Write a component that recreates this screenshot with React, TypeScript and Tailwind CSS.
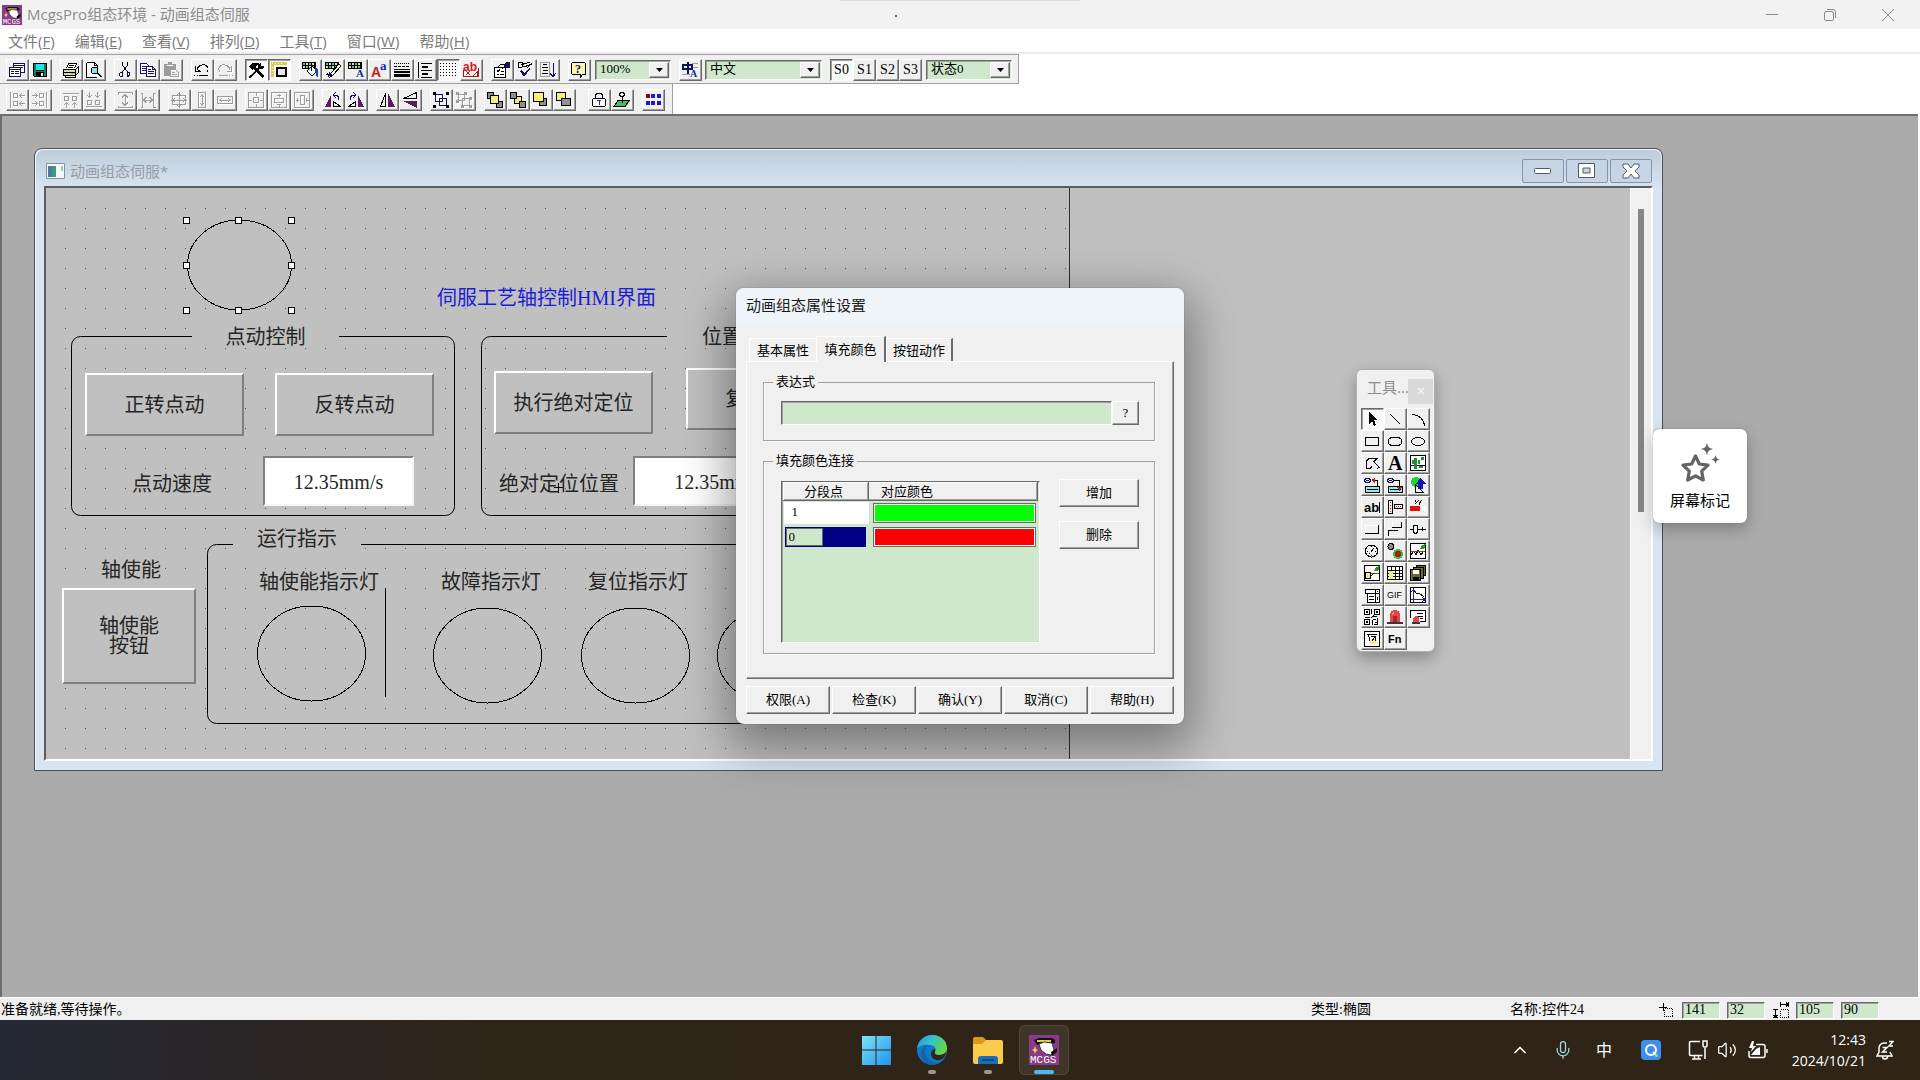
import { ReactNode, useState } from "react";
import { ChevronUp, Mic, Volume2, X } from "lucide-react";

// [color, path, "f" for fill (stroke otherwise)]
type Layer = [string, string, string?];
// [x, y, size, color, text, font]
type Label = [number, number, number, string, string, string];
type Art = { layers: Layer[]; labels?: Label[]; muted?: boolean };

const K = "#000000";
const N = "#10105e";
const G = "#9c9c9c";
const P = "#5b1a63";
const Y = "#f6f07a";
const SANS = "Liberation Sans";
const SERIF = "Liberation Serif";

const PALETTE: Layer[] = [
  [K, "M0 0h14v7h-14z", "f"],
  ["#4fc3b0", "M1 1h2v2h-2zM7 1h2v2h-2zM4 4h2v2h-2zM10 4h2v2h-2z", "f"],
  ["#e9e08a", "M4 1h2v2h-2zM10 1h2v2h-2zM1 4h2v2h-2zM7 4h2v2h-2z", "f"]
];

const ART: Record<string, Art> = {
  窗口列表: {
    layers: [
      ["#fff", "M4 1h11v10h-11z", "f"],
      [N, "M4.5 1.5h11v9h-11zM4 3.5h11M6 5.5h8"],
      ["#fff", "M1 5h10v9h-10z", "f"],
      [N, "M.5 5.5h11v9h-11zM1 7.5h10M2 9.5h3M6 9.5h4M2 11.5h3M6 11.5h4"]
    ]
  },
  存盘: {
    layers: [
      [K, "M1 1h14v14h-13l-1-1z", "f"],
      ["#0f7d6c", "M2 2h2v12h-2zM12 2h2v12h-2z", "f"],
      ["#22e6e6", "M4 2h8v6h-8z", "f"],
      ["#0f7d6c", "M2 9h12v1h-12z", "f"],
      ["#e8e8e8", "M9 11h2v3h-2z", "f"]
    ]
  },
  打印: {
    layers: [
      ["#fff", "M5 1h9l-2 6h-9z", "f"],
      [K, "M5.5 1.5h8l-2 5M5.5 1.5l-2 5M6 3.5h5M5 5.5h5"],
      ["#d9d9c0", "M1 7h13v6h-13z", "f"],
      [K, "M.5 7.5h12v6h-12zM12.5 7.5l3-3v6l-3 3M1 10.5h11M2.5 13.5v2h10v-2"],
      ["#c8b400", "M8 11h3v1h-3z", "f"]
    ]
  },
  打印预览: {
    layers: [
      ["#fff", "M1 0h8l3 3v12h-11z", "f"],
      [K, "M.5 .5h8l3 3v3M.5 .5v15h10M8.5 .5v3h3"],
      ["#8fe3ea", "M6 6h5v5h-5z", "f"],
      [K, "M6.5 5.5h4l1 1v4l-1 1h-4l-1-1v-4zM11 11l4 4M12 11l4 4"]
    ]
  },
  剪切: { layers: [[K, "M5.5 0v3l5 7M10.5 0v3l-5 7"], [N, "M3.5 10.5h2v4h-2l-1-1v-2zM10.5 10.5h2v2l-1 2h-1z"]] },
  复制: {
    layers: [
      ["#fff", "M1 1h6l3 3v8h-9z", "f"],
      [N, "M.5 1.5h6l2 2v8h-8zM2 4.5h4M2 6.5h5M2 8.5h5"],
      ["#fff", "M7 4h6l3 3v8h-9z", "f"],
      [N, "M6.5 4.5h6l3 3v7h-9zM12.5 4.5v3h3M8 7.5h3M8 9.5h6M8 11.5h6"]
    ]
  },
  粘贴: {
    muted: true,
    layers: [[G, "M1 2h4v-2h4v2h4v5h-6v7h-6z", "f"], ["#fff", "M4 3h6v1h-6z", "f"], [G, "M7.5 7.5h5l3 3v4h-8zM9 10.5h3M9 12.5h5"]]
  },
  撤消: { layers: [[K, "M3 8C4 2 12 1 14 6c.5 2 0 3-1 4M1.5 4v5h5M3.5 8.5h2M0 13.5h1M3 13.5h1M5 13.5h9"]] },
  重做: { muted: true, layers: [[G, "M13 8C12 2 4 1 2 6c-.5 2 0 3 1 4M14.5 4v5h-5M2 13.5h9M12 13.5h1M15 13.5h1"]] },
  工具箱: {
    layers: [
      [K, "M1 4l3-3h6l2 2-1 1-2-1-1 2 8 9-2 2-8-9-2 1z", "f"],
      [K, "M12 1h1v3h3v1l-2 2h-3l-8 9h-2v-2l9-8v-3z", "f"],
      ["#c8a060", "M3 13l4-5 0 1-3 4z", "f"]
    ]
  },
  绘图编辑: {
    layers: [
      ["#d6cb55", "M0 0h16v3h-16zM0 3h3v12h-3z", "f"],
      ["#fff", "M1 1h1v1h-1zM4 1h1v1h-1zM7 1h1v1h-1zM10 1h1v1h-1zM1 5h1v1h-1zM1 8h1v1h-1zM1 11h1v1h-1z", "f"],
      ["#e8e8e8", "M6 6h10v9h-10z", "f"],
      [K, "M5 5h11v10h-11zM7 7v6h7v-6z", "f"]
    ]
  },
  填充色: {
    layers: [
      ...PALETTE,
      ["#fff", "M5 9l5-5 5 5-5 5z", "f"],
      [K, "M5 9l5-5 5 5-5 5zM9.5 9v-8"],
      ["#1645b5", "M13 5l3 2v8h-1l-2-6z", "f"]
    ]
  },
  线色: {
    layers: [...PALETTE, ["#fff", "M6 11l8-9 2 2-8 9z", "f"], [K, "M6 11l8-9 2 2-8 9-3 2zM1 13c2-4 2 3 5 0"], [N, "M4 10l4 3-5 2z", "f"]]
  },
  字符色: { layers: PALETTE, labels: [[8, 15, 11, "#10308a", "A", SERIF]] },
  字符字体: { layers: [], labels: [[0, 15, 14, "#c81c1c", "A", SANS], [9, 8, 13, "#1c1cc8", "a", SERIF]] },
  线型: {
    layers: [
      [K, "M0 1.5h1M2 1.5h1M4 1.5h1M6 1.5h1M8 1.5h1M10 1.5h1M12 1.5h1M14 1.5h1M0 4.5h3M4 4.5h3M8 4.5h3M12 4.5h3"],
      [K, "M0 7h16v1h-16zM0 9h16v2h-16zM0 12h16v3h-16z", "f"]
    ]
  },
  对齐: { layers: [[K, "M1.5 0v16M4 1.5h11M5 4.5h6M5 5.5h6M4 8.5h11M5 11.5h6M5 12.5h6M4 15.5h11"]] },
  网格: {
    layers: [[K, "M0 1.5h1M3 1.5h1M6 1.5h1M9 1.5h1M12 1.5h1M15 1.5h1M0 4.5h1M3 4.5h1M6 4.5h1M9 4.5h1M12 4.5h1M15 4.5h1M0 7.5h1M3 7.5h1M6 7.5h1M9 7.5h1M12 7.5h1M15 7.5h1M0 10.5h1M3 10.5h1M6 10.5h1M9 10.5h1M12 10.5h1M15 10.5h1M0 13.5h1M3 13.5h1M6 13.5h1M9 13.5h1M12 13.5h1M15 13.5h1"]]
  },
  文字替换: {
    layers: [["#a01818", "M.5 7.5v7h15v-9M3 9l4 4M7 9l-4 4M10 14l4-4v4z"]],
    labels: [[0, 9, 12, "#d01818", "ab", SANS]]
  },
  属性: {
    layers: [
      ["#fff", "M1 5h11v10h-11z", "f"],
      [K, "M.5 5.5h11v10h-11zM3 8.5l1 1 2-2M7 9.5h3M3 12.5h2M6 12.5h4M4 5l3-3h4l1 2-4 3"],
      [N, "M12 0h4v6h-4l-2-2z", "f"]
    ]
  },
  检查: { layers: [[K, "M1.5 .5h4l1 2-2 3h-3zM4 3l9-3M6 5l9-3M7 4.5h3M10 6l5-5"], [N, "M3 9l2-1 2 3 5-5 1 1-6 8z", "f"]] },
  排序: { layers: [[G, "M.5 .5h9v14h-9z"], [K, "M3 2.5h4M2 5.5h6M3 8.5h5M2 11.5h6"], [N, "M13 1v13M10 11l3 4 3-4"]] },
  帮助: { layers: [["#fbf7b0", "M1 0h13l1 2v10h-4l-2 3v-3h-8z", "f"], [K, "M1.5 .5h12l1 1v11h-3l-2 3v-3h-8l-1-1v-10z"]], labels: [[4, 11, 12, N, "?", SERIF]] },
  语言: { layers: [[G, "M10 1.5h6M10 5.5h6M0 12.5h8"], [N, "M5 0h2v12h-2zM0 2h11v6h-11zM2 4v2h7v-2z", "f"]], labels: [[8, 15, 10, "#10308a", "A", SERIF]] },

  左对齐: { muted: true, layers: [[G, "M1.5 0v16M4.5 1.5h4v4h-4zM4.5 9.5h4v4h-4zM16 3.5h-5M13 1l-2 2.5 2 2.5M16 11.5h-5M13 9l-2 2.5 2 2.5"]] },
  右对齐: { muted: true, layers: [[G, "M14.5 0v16M7.5 1.5h4v4h-4zM7.5 9.5h4v4h-4zM0 3.5h5M3 1l2 2.5-2 2.5M0 11.5h5M3 9l2 2.5-2 2.5"]] },
  上对齐: { muted: true, layers: [[G, "M0 1.5h16M1.5 4.5h4v4h-4zM9.5 4.5h4v4h-4zM3.5 16v-5M1 13l2.5-2 2.5 2M11.5 16v-5M9 13l2.5-2 2.5 2"]] },
  下对齐: { muted: true, layers: [[G, "M0 14.5h16M1.5 8.5h4v4h-4zM9.5 8.5h4v4h-4zM3.5 0v5M1 3l2.5 2 2.5-2M11.5 0v5M9 3l2.5 2 2.5-2"]] },
  纵向等间距: { muted: true, layers: [[G, "M1 .5h14v2M1.5 .5v2M1 15.5h14v-2M1.5 15.5v-2M8 3v10M5 5.5l3-3 3 3M5 10.5l3 3 3-3"]] },
  横向等间距: { muted: true, layers: [[G, "M.5 1h2v14h-2M15.5 1h-2v14h2M4 8h8M6.5 5l-3 3 3 3M9.5 5l3 3-3 3"]] },
  等高宽: { muted: true, layers: [[G, "M1.5 3.5h13v9h-13zM8 0v16M0 8h16M6 3l2-2 2 2M6 13l2 2 2-2M4 6l-2 2 2 2M12 6l2 2-2 2"]] },
  等高: { muted: true, layers: [[G, "M4.5 .5h7v15h-7zM8 2v12M6 5l2-2 2 2M6 11l2 2 2-2"]] },
  等宽: { muted: true, layers: [[G, "M.5 4.5h15v7h-15zM2 8h12M5 6l-2 2 2 2M11 6l2 2-2 2"]] },
  窗口居中: { muted: true, layers: [[G, "M.5 .5h15v15h-15zM5.5 5.5h5v5h-5zM8 1v3M8 12v3M1 8h3M12 8h3"]] },
  纵向居中: { muted: true, layers: [[G, "M.5 .5h15v15h-15zM3.5 6.5h9v4h-9zM8 2v3M8 12v3M6 3.5h4M6 12.5h4"]] },
  横向居中: { muted: true, layers: [[G, "M.5 .5h15v15h-15zM6.5 3.5h4v9h-4zM2 8h3M12 8h3M3.5 6v4M12.5 6v4"]] },
  左旋: { layers: [[P, "M6 3v12h-6z", "f"], [K, "M8.5 14.5l7 0-7-5z"], [N, "M13.5 8v-3l-2-2h-3M11 0l-3 3 3 3"]] },
  右旋: { layers: [[P, "M10 3v12h6z", "f"], [K, "M7.5 14.5l-7 0 7-5z"], [N, "M2.5 8v-3l2-2h3M5 0l3 3-3 3"]] },
  左右镜像: { layers: [[K, "M6.5 1.5v13h-5z"], [P, "M9 1v14h7z", "f"]] },
  上下镜像: { layers: [[K, "M14.5 .5v6h-13z"], [P, "M15 9v7l-14-7z", "f"]] },
  组合: {
    layers: [
      ["#fff", "M3 3h8v8h-8z", "f"],
      [N, "M2.5 2.5h7v7h-7zM6.5 6.5h7v7h-7z"],
      [K, "M0 0h3v3h-3zM13 0h3v3h-3zM0 13h3v3h-3zM13 13h3v3h-3z", "f"]
    ]
  },
  分解: { muted: true, layers: [[G, "M2.5 2.5h6v6h-6zM6.5 6.5h7v7h-7z"], [G, "M0 0h3v3h-3zM8 0h3v3h-3zM0 8h3v3h-3zM13 5h3v3h-3zM5 13h3v3h-3zM13 13h3v3h-3z", "f"]] },
  最前面: { layers: [["#909090", "M1 1h6v6h-6zM9 9h6v6h-6z", "f"], [K, "M.5 .5h6v6h-6zM9.5 9.5h6v6h-6z"], [Y, "M4 4h8v8h-8z", "f"], [K, "M3.5 3.5h8v8h-8z"]] },
  最后面: { layers: [[Y, "M4 4h8v8h-8z", "f"], [K, "M4.5 4.5h7v7h-7z"], ["#909090", "M0 0h7v7h-7zM9 9h7v7h-7z", "f"], [K, "M.5 .5h6v6h-6zM9.5 9.5h6v6h-6z"]] },
  前一层: { layers: [["#909090", "M6 7h8v7h-8z", "f"], [K, "M6.5 6.5h7v7h-7z"], [Y, "M1 1h9v9h-9z", "f"], [K, "M.5 .5h10v9h-10z"]] },
  后一层: { layers: [[Y, "M1 1h9v8h-9z", "f"], [K, "M.5 .5h9v8h-9z"], ["#909090", "M6 7h8v7h-8z", "f"], [K, "M5.5 6.5h9v7h-9z"]] },
  锁定: { layers: [["#fff", "M2 6h12v9h-12z", "f"], [K, "M2.5 6.5h11l1 1v6l-1 1h-11l-1-1v-6zM4.5 6v-3l2-2h3l2 2v3"], ["#2020c0", "M6 8.5h4M8 8v5"]] },
  固化: { layers: [["#3fbf5f", "M4 9h12l-4 6h-12z", "f"], [K, "M4 8.5h11l-4 6h-11zM8 5v6M6.5 .5h3l1 2-1 2h-3l-1-2z"]] },
  多重复制: { layers: [["#7a0c0c", "M1 2h4v4h-4z", "f"], ["#1a1ac8", "M6 2h4v4h-4zM12 2h4v4h-4zM1 9h4v4h-4zM6 9h4v4h-4zM12 9h4v4h-4z", "f"]] }
};

const TOOLBOX: [string, Art][] = [
  ["选择器", { layers: [[K, "M5 1v12l3-3 2 5 2-1-2-5h4z", "f"]] }],
  ["直线", { layers: [[K, "M3 3l10 10"]] }],
  ["弧线", { layers: [[K, "M2 4c7-1 11 4 13 11"]] }],
  ["矩形", { layers: [[K, "M1.5 4.5h13v8h-13z"]] }],
  ["圆角矩形", { layers: [[K, "M4 4.5h8l2.5 2v4l-2.5 2h-8l-2.5-2v-4z"]] }],
  ["椭圆", { layers: [[K, "M1.5 8.5a6.5 4 0 1 0 13 0a6.5 4 0 1 0-13 0"]] }],
  ["折线", { layers: [[K, "M5 3.5h8l-3 3 5 6-2 1M5 3.5l-3 3v7h4l2-2"]] }],
  ["标签", { layers: [], labels: [[1, 15, 20, K, "A", SERIF]] }],
  ["位图", { layers: [["#fff", "M1 1h14v14h-14z", "f"], [K, "M.5 .5h15v15h-15zM1 10.5h14"], ["#238a3c", "M4 3h3v11h-3zM2 5h2v4h-2zM8 5h2v4h-2zM11 2h3v3h-3zM9 11h4v2h-4z", "f"]] }],
  ["输入控制", { layers: [[N, "M1.5 1.5h4l1 2-1 2h-4l-1-2zM2 3.5h3"], ["#c81818", "M7 3l4-2v5z", "f"], [K, "M11 3.5h2v6"], ["#9fe6f0", "M2 9h14v6h-14z", "f"], [K, "M1.5 9.5h14v6h-14zM3 12.5h11"]] }],
  ["输出控制", { layers: [[N, "M1.5 1.5h4l1 2-1 2h-4l-1-2zM2 3.5h3"], [K, "M7 3.5h5v8"], ["#9fe6f0", "M2 9h14v6h-14z", "f"], [K, "M1.5 9.5h14v6h-14zM3 12.5h11"], ["#c81818", "M10 10h5l-2.5 4z", "f"]] }],
  ["常用符号", { layers: [["#22d436", "M1 5a5 5 0 1 0 10 0a5 5 0 1 0-10 0", "f"], [K, "M5 7v8M5 7l8 8h-8"], ["#1414a8", "M10 1l6 6h-3v5h-5v-5h-2z", "f"]] }],
  ["输入框", { layers: [[K, "M15.5 3v11"]], labels: [[0, 13, 13, K, "ab", SANS]] }],
  ["流动块", { layers: [[K, "M1.5 1.5h4v13h-4zM7.5 5.5h8v4h-8z"], ["#c01818", "M3.5 3v1M3.5 6v1M3.5 9v1M3.5 12v1M9 7.5h1M11 7.5h1M13 7.5h1"]] }],
  ["百分比填充", { layers: [["#fff", "M0 7h16v5h-16z", "f"], ["#e01010", "M0 7h10v5h-10z", "f"], [K, "M5 1v2M9 1l-4 4M9 4v2M12 1l-3 4"]] }],
  ["标准按钮", { layers: [["#fff", "M1 4h13v1h-13zM1 4h1v8h-1z", "f"], [K, "M1 12.5h13.5v-9"]] }],
  ["动画按钮", { layers: [[K, "M5 6.5h9.5v-6M1 9.5h10M1.5 9v6"], ["#fff", "M5 0h1v6h-1zM2 14h9v1h-9z", "f"]] }],
  ["滑动输入器", { layers: [[K, "M0 8.5h3M8 8.5h7.5M12.5 6v4M3.5 5l1-1h2l1 1v6l-1 1h-2l-1-1z"]] }],
  ["旋钮输入器", { layers: [[K, "M1.5 8a6 6 0 1 0 12 0a6 6 0 1 0-12 0M7.5 3v1M7.5 12v1M3 8h1M11 8h1M7 9l3-4M5 11l1-1"]] }],
  ["旋转仪表", { layers: [["#8c8c8c", "M1 3.5a3 3 0 1 0 6 0a3 3 0 1 0-6 0", "f"], ["#36c446", "M6 11a5 5 0 1 0 10 0a5 5 0 1 0-10 0", "f"], ["#b01818", "M8 11a3 3 0 1 0 6 0a3 3 0 1 0-6 0", "f"], [K, "M1 3.5a3 3 0 1 0 6 0a3 3 0 1 0-6 0"]] }],
  ["实时曲线", { layers: [["#fff", "M1 1h14v14h-14z", "f"], [K, "M.5 .5h15v15h-15zM1 12l3-4 2 4 2-5 3 5 2-3"], ["#d02020", "M1 8.5h14"], ["#18a018", "M10 6l2-4 4-1-2 5z", "f"]] }],
  ["历史曲线", { layers: [["#fff", "M1 1h14v14h-14z", "f"], [K, "M.5 .5h15v15h-15z"], ["#d02020", "M6 8.5h9"], [Y, "M1 7h6v7h-6z", "f"], [K, "M1.5 7.5h5v6h-5zM7 11l3-3"], ["#18a018", "M10 6l2-4 4-1-2 5z", "f"]] }],
  ["历史表格", { layers: [["#fff", "M1 1h14v14h-14z", "f"], [K, "M.5 1.5h15v13h-15zM1 5.5h15M1 8.5h15M1 11.5h15M4.5 1v14M8.5 1v14M12.5 1v14"], [Y, "M2 6h4v8h-4z", "f"]] }],
  ["存盘数据", { layers: [["#6e6830", "M1 5h10v11h-10zM4 3h10v10h-3v-8h-7zM6 0h10v10h-2v-7h-8z", "f"], [K, "M.5 4.5h10v11h-10zM3.5 4v-2h10v11h-3M6.5 2v-2h9v10h-2"], ["#fff", "M3 5h6v4h-6z", "f"], [K, "M3 12h6v4h-6z", "f"]] }],
  ["组合框", { layers: [["#fff", "M1 2h14v4h-14zM3 6h12v9h-12z", "f"], [K, "M1.5 2.5h14v4h-14zM3.5 6v9h12v-9M11.5 3v12M5 9.5h5M5 12.5h5M13 4.5h1M13 10v3"]] }],
  ["动画显示", { layers: [], labels: [[0, 11, 9, K, "GIF", SANS]] }],
  ["相对曲线", { layers: [["#fff", "M1 1h14v14h-14z", "f"], [K, "M.5 .5h15v15h-15zM4 4l3 3 2-1 5 4"], ["#1c1cc0", "M3.5 15v-13M1 12.5h14M1.5 5l2-3 2 3M12 10l3 2.5-3 2.5"]] }],
  ["二维码", { layers: [[K, "M.5 .5h5v5h-5zM10.5 .5h5v5h-5zM.5 10.5h5v5h-5zM7.5 0v5M8 7.5h5M1 8.5h5M9 10.5h3M13.5 9v6M8.5 11v5M11 13.5h2M7 9l3-3M10 15.5h4"], [K, "M2 2h2v2h-2zM12 2h2v2h-2zM2 12h2v2h-2z", "f"]] }],
  ["报警灯", { layers: [["#e04848", "M3 13v-7a5 5 0 0 1 10 0v7z", "f"], ["#a82828", "M6 7h4v6h-4z", "f"], ["#f49a9a", "M5 4l2-2v2l-2 3z", "f"], ["#333745", "M0 13h16v2h-16z", "f"]] }],
  ["报警浏览", { layers: [["#fff", "M1 2h15v11h-15z", "f"], [K, "M.5 9v-7.5h15v11h-6M7 4.5h6M8 7.5h5M10 9.5h3"], ["#e04848", "M3 13v-4l2-2h2l2 2v4z", "f"], ["#333745", "M2 13h8v2h-8z", "f"]] }],
  ["视频", { layers: [["#fff", "M1 1h14v14h-14z", "f"], [K, "M.5 .5h15v15h-15zM3 3.5h10M4.5 4l2 8M7 5.5h4v5M11 6l-4 5"], [Y, "M6 10h6l2 3h-7z", "f"]] }],
  ["函数", { layers: [], labels: [[1, 12, 11, K, "Fn", SANS]] }]
];

const BAR_ONE = [
  ["窗口列表", "存盘"],
  ["打印", "打印预览"],
  ["剪切", "复制", "粘贴"],
  ["撤消", "重做"],
  ["工具箱", "绘图编辑"],
  ["填充色", "线色", "字符色", "字符字体", "线型", "对齐", "网格", "文字替换"],
  ["属性", "检查", "排序"],
  ["帮助"]
];

const BAR_TWO = [
  ["左对齐", "右对齐"],
  ["上对齐", "下对齐"],
  ["纵向等间距", "横向等间距"],
  ["等高宽", "等高", "等宽"],
  ["窗口居中", "纵向居中", "横向居中"],
  ["左旋", "右旋"],
  ["左右镜像", "上下镜像"],
  ["组合", "分解"],
  ["最前面", "最后面", "前一层", "后一层"],
  ["锁定", "固化"],
  ["多重复制"]
];

const PRESSED = ["工具箱", "绘图编辑", "网格"];
const MENUS = [["文件", "F"], ["编辑", "E"], ["查看", "V"], ["排列", "D"], ["工具", "T"], ["窗口", "W"], ["帮助", "H"]];
const TABS = ["基本属性", "填充颜色", "按钮动作"];
const FOOTER = ["权限(A)", "检查(K)", "确认(Y)", "取消(C)", "帮助(H)"];

const UI_FONT = "font-['Open_Sans','Noto_Sans_CJK_SC',sans-serif]";
const SONG_FONT = "font-['Liberation_Serif','Noto_Sans_CJK_SC',serif]";
const RAISED = "border border-t-white border-l-white border-r-[#696969] border-b-[#696969] shadow-[inset_-1px_-1px_0_#a0a0a0]";
const SUNKEN = "border border-t-[#696969] border-l-[#696969] border-r-white border-b-white shadow-[inset_1px_1px_0_#a0a0a0]";
const FIELDSET = "border border-[#a0a0a0] pr-[15px] pl-[17px] shadow-[1px_1px_0_#fff,inset_1px_0_0_#fff]";

function PixelIcon({ art }: { art: Art }) {
  return (
    <svg
      viewBox="0 0 16 16"
      className={`h-4 w-4 overflow-visible ${art.muted ? "drop-shadow-[1px_1px_0_#ffffff]" : ""}`}
      shapeRendering="crispEdges"
      aria-hidden="true"
    >
      {art.layers.map(([color, d, mode], i) => (
        <path key={i} d={d} fill={mode ? color : "none"} stroke={mode ? "none" : color} strokeWidth="1" />
      ))}
      {art.labels?.map(([x, y, size, color, text, font], i) => (
        <text key={i} x={x} y={y} fontSize={size} fill={color} fontWeight={text === "GIF" ? 400 : 700} fontFamily={font}>
          {text}
        </text>
      ))}
    </svg>
  );
}

function ToolButton({ name, art, pressed }: { name: string; art: Art; pressed?: boolean }) {
  return (
    <button
      type="button"
      aria-label={name}
      className={`flex h-[22px] w-[23px] items-center pl-0.5 ${pressed ? `bg-[#f9f9f9] ${SUNKEN}` : `bg-[#f0f0f0] ${RAISED}`}`}
    >
      <PixelIcon art={art} />
    </button>
  );
}

function ButtonGroups({ groups }: { groups: string[][] }) {
  return (
    <>
      {groups.map((group) => (
        <div key={group[0]} className={`flex ${group[0] === "锁定" ? "ml-1" : ""}`}>
          {group.map((name) => (
            <ToolButton key={name} name={name} art={ART[name]} pressed={PRESSED.includes(name)} />
          ))}
        </div>
      ))}
    </>
  );
}

function Combo({ label, value, width }: { label: string; value: string; width: string }) {
  return (
    <div className={`relative h-5 ${width}`}>
      <select aria-label={label} className={`block h-full w-full appearance-none bg-[#cfe8cb] pb-[3px] pl-1 text-[13px] leading-4 ${SUNKEN}`}>
        <option>{value}</option>
      </select>
      <span className={`pointer-events-none absolute inset-y-0.5 right-0.5 flex w-5 items-center justify-center bg-[#f0f0f0] ${RAISED}`}>
        <svg viewBox="0 0 7 4" className="h-1 w-[7px]" aria-hidden="true">
          <path d="M0 0h7L3.5 4z" />
        </svg>
      </span>
    </div>
  );
}

function McgsLogo({ className }: { className: string }) {
  return (
    <svg viewBox="0 0 30 30" className={className} aria-hidden="true">
      <path d="M0 0h30v30H0z" fill="#8a3a86" />
      <path d="M5 5l5-2h13l3 2v3l-4 1-6-1-8 2z" fill="#111" />
      <path d="M8 5h14v2H8z" fill="#e8cf3c" />
      <path d="M10 9l5-2 8 1 2 7-3 5-5-1-5-4z" fill="#fff" stroke="#222" strokeWidth=".8" />
      <path d="M22 17l6-4v4l-5 4z" fill="#111" />
      <path d="M6 11l1 3 2 1-2 1-1 3-1-3-2-1 2-1z" fill="#f0d060" />
      <text x="1" y="28" fontSize="11" fill="#fff" fontFamily="Liberation Mono">
        MCGS
      </text>
    </svg>
  );
}

function TitleBar() {
  return (
    <header className="flex h-[29px] items-center bg-[#f2f2f2] pl-0.5 text-[#8c8c8c]">
      <McgsLogo className="h-5 w-5" />
      <h1 className="ml-[5px] flex-1 pb-0.5 text-[15px] leading-5">McgsPro组态环境 - 动画组态伺服</h1>
      <button type="button" aria-label="最小化" className="flex h-full w-[58px] items-center justify-center">
        <span className="h-px w-3 bg-[#8c8c8c]" />
      </button>
      <button type="button" aria-label="还原" className="flex h-full w-[58px] items-center justify-center">
        <svg viewBox="0 0 12 12" className="h-3 w-3" fill="none" stroke="#8c8c8c" aria-hidden="true">
          <rect x=".5" y="2.5" width="9" height="9" rx="1.5" />
          <path d="M3 .5h6a2.5 2.5 0 0 1 2.5 2.5v6" />
        </svg>
      </button>
      <button type="button" aria-label="关闭" className="mr-[3px] flex h-full w-[58px] items-center justify-center">
        <svg viewBox="0 0 12 12" className="h-3 w-3" stroke="#8c8c8c" aria-hidden="true">
          <path d="M0 0l12 12M12 0L0 12" />
        </svg>
      </button>
    </header>
  );
}

function MenuBar() {
  return (
    <nav className="flex h-[25px] items-center gap-5 border-b-2 border-[#ececec] bg-white pl-2 text-[15px] leading-5 text-[#7b7b7b]">
      {MENUS.map(([text, key]) => (
        <button key={text} type="button">
          {text}(<u>{key}</u>)
        </button>
      ))}
    </nav>
  );
}

function Toolbars() {
  const [state, setState] = useState("S0");

  return (
    <div className={`bg-white ${SONG_FONT}`}>
      <div className="flex h-[30px] w-[1019px] items-center gap-2 border-t border-r border-b border-[#a0a0a0] bg-[#f0f0f0] pt-0.5 pl-1.5">
        <ButtonGroups groups={BAR_ONE} />
        <div className="-ml-1">
          <Combo label="显示比例" value="100%" width="w-[76px]" />
        </div>
        <div className="flex items-center gap-[3px]">
          <ToolButton name="语言" art={ART["语言"]} />
          <Combo label="语言选择" value="中文" width="w-[117px]" />
        </div>
        <div className="flex items-center">
          {["S0", "S1", "S2", "S3"].map((name) => (
            <button
              key={name}
              type="button"
              onClick={() => setState(name)}
              className={`flex h-[22px] w-[23px] items-center justify-center text-sm ${state === name ? `bg-[#f9f9f9] ${SUNKEN}` : `bg-[#f0f0f0] ${RAISED}`}`}
            >
              {name}
            </button>
          ))}
          <div className="ml-1">
            <Combo label="状态" value="状态0" width="w-[86px]" />
          </div>
        </div>
      </div>
      <div className="flex h-[30px] w-[673px] items-center gap-2 border-r border-[#a0a0a0] bg-[#f0f0f0] pt-0.5 pl-1.5">
        <ButtonGroups groups={BAR_TWO} />
      </div>
    </div>
  );
}

function CanvasText({ place, children }: { place: string; children: ReactNode }) {
  return <span className={`absolute whitespace-nowrap ${place}`}>{children}</span>;
}

function CanvasButton({ place, children }: { place: string; children: ReactNode }) {
  return (
    <button
      type="button"
      className={`absolute flex items-center justify-center border-2 border-t-white border-l-white border-r-[#808080] border-b-[#808080] bg-[#c0c0c0] ${place}`}
    >
      {children}
    </button>
  );
}

function CanvasInput({ place, label }: { place: string; label: string }) {
  return (
    <input
      aria-label={label}
      defaultValue="12.35mm/s"
      className={`absolute h-[50px] border-2 border-t-[#808080] border-l-[#808080] border-r-[#f4f4f4] border-b-[#f4f4f4] bg-white pt-0.5 text-center ${place}`}
    />
  );
}

function DesignCanvas() {
  return (
    <div className={`relative min-w-0 flex-1 overflow-hidden bg-[#c0c0c0] text-xl leading-5 text-[#262626] ${SONG_FONT}`}>
      <svg className="absolute inset-0 h-full w-full" fill="none" stroke="#000000" aria-hidden="true">
        <defs>
          <pattern id="dots" width="20" height="20" patternUnits="userSpaceOnUse">
            <rect x="19" y="0" width="1" height="1" fill="#555555" stroke="none" />
          </pattern>
        </defs>
        <rect x="0" y="20" width="1022" height="541" fill="url(#dots)" stroke="none" />
        <path d="M1023.5 0v600" stroke="#303030" />
        <rect x="25.5" y="148.5" width="383" height="179" rx="9" />
        <rect x="435.5" y="148.5" width="560" height="179" rx="9" />
        <rect x="161.5" y="356.5" width="834" height="179" rx="9" />
        <path d="M339.5 400v109M508 299.5h9M512.5 295v10" />
        <g shapeRendering="crispEdges">
          <ellipse cx="193.5" cy="77" rx="52" ry="45" fill="#c0c0c0" />
          <ellipse cx="265.5" cy="465.5" rx="54" ry="47.5" />
          <ellipse cx="441.5" cy="467.5" rx="54" ry="47.5" />
          <ellipse cx="589.5" cy="467.5" rx="54" ry="47.5" />
          <ellipse cx="725.5" cy="467.5" rx="54" ry="47.5" />
          {[141, 193, 246].map((x) =>
            [33, 78, 123].map((y) =>
              x === 193 && y === 78 ? null : <rect key={`${x}-${y}`} x={x - 3.5} y={y - 3.5} width="6" height="6" fill="#ffffff" />
            )
          )}
        </g>
      </svg>

      <CanvasText place="left-[391px] top-[100px] text-[#1c1cd8]">伺服工艺轴控制HMI界面</CanvasText>

      <CanvasText place="left-[146px] top-[139px] w-[147px] bg-[#c0c0c0] text-center">点动控制</CanvasText>
      <CanvasButton place="left-[39px] top-[185px] h-[63px] w-[159px]">正转点动</CanvasButton>
      <CanvasButton place="left-[229px] top-[185px] h-[63px] w-[159px]">反转点动</CanvasButton>
      <CanvasText place="left-[86px] top-[286px]">点动速度</CanvasText>
      <CanvasInput place="left-[217px] top-[268px] w-[151px]" label="点动速度" />

      <CanvasText place="left-[621px] top-[139px] w-[150px] bg-[#c0c0c0] text-center">位置控制</CanvasText>
      <CanvasButton place="left-[448px] top-[183px] h-[63px] w-[159px]">执行绝对定位</CanvasButton>
      <CanvasButton place="left-[640px] top-[180px] h-[62px] w-[159px]">复位按钮</CanvasButton>
      <CanvasText place="left-[453px] top-[286px]">绝对定位位置</CanvasText>
      <CanvasInput place="left-[587px] top-[268px] w-[172px]" label="绝对定位位置" />

      <CanvasText place="left-[187px] top-[341px] w-[128px] bg-[#c0c0c0] text-center">运行指示</CanvasText>
      <CanvasText place="left-[55px] top-[372px]">轴使能</CanvasText>
      <CanvasButton place="left-[16px] top-[400px] h-[96px] w-[134px]">
        <span>
          轴使能
          <br />
          按钮
        </span>
      </CanvasButton>
      <CanvasText place="left-[213px] top-[384px] bg-[#c0c0c0]">轴使能指示灯</CanvasText>
      <CanvasText place="left-[395px] top-[384px] bg-[#c0c0c0]">故障指示灯</CanvasText>
      <CanvasText place="left-[542px] top-[384px] bg-[#c0c0c0]">复位指示灯</CanvasText>
    </div>
  );
}

function ChildWindow() {
  const button = "flex h-6 w-[42px] items-center justify-center rounded-xs border border-[#8295b3] bg-[#c6d4e3]";

  return (
    <section className="absolute left-8 top-8 flex h-[623px] w-[1629px] flex-col rounded-t-lg border border-[#4a5058] bg-[#d8e4f1] px-[9px] pb-[9px] shadow-[inset_1px_1px_0_#f4f8fc]">
      <div className="-mx-[8px] mt-px flex h-[36px] items-center rounded-t-lg bg-linear-to-b from-[#bfcdda] to-[#d6e2ef] pt-[5px] pr-[9px] pl-[10px]">
        <svg viewBox="0 0 19 16" className="h-4 w-[19px]" aria-hidden="true">
          <path d="M.5 .5h18v15H.5z" fill="#f7f7f7" stroke="#7d95a8" />
          <path d="M2 3h8v11H2z" fill="#3f9a78" />
          <path d="M2 3h4v11H2z" fill="#4d7ba0" />
          <path d="M16 3v5" stroke="#3f9a78" />
        </svg>
        <h2 className="ml-[5px] flex-1 text-[15px] leading-5 text-[#979da4]">动画组态伺服*</h2>
        <div className="flex gap-0.5">
          <button type="button" aria-label="最小化子窗口" className={button}>
            <svg viewBox="0 0 18 6" className="h-1.5 w-[18px]" aria-hidden="true">
              <rect x=".5" y=".5" width="16" height="5" rx="1" fill="#fff" stroke="#4f5b6b" />
            </svg>
          </button>
          <button type="button" aria-label="最大化子窗口" className={button}>
            <svg viewBox="0 0 18 16" className="h-4 w-[18px]" aria-hidden="true">
              <path fillRule="evenodd" d="M.5 .5h16v14H.5zM5 5v5h7V5z" fill="#fff" stroke="#4f5b6b" />
            </svg>
          </button>
          <button type="button" aria-label="关闭子窗口" className={button}>
            <svg viewBox="0 0 18 16" className="h-4 w-[18px]" aria-hidden="true">
              <path d="M1 1h5l3 4 3-4h5v3l-4 4 4 4v3h-5l-3-4-3 4H1v-3l4-4-4-4z" fill="#fff" stroke="#4f5b6b" />
            </svg>
          </button>
        </div>
      </div>
      <div className="flex min-h-0 flex-1 border-2 border-t-[#5c5c5c] border-r-white border-b-white border-l-[#5c5c5c]">
        <DesignCanvas />
        <div className="flex w-[21px] justify-center border-l border-white bg-[#f0f0f0] pt-[21px]">
          <span className="h-[303px] w-1.5 bg-[#868686]" />
        </div>
      </div>
    </section>
  );
}

function ColorCell({ color }: { color: string }) {
  return (
    <td className="p-0">
      <div className="ml-1 h-5 w-[163px] border border-[#696969] bg-white p-px">
        <div className={`h-full ${color}`} />
      </div>
    </td>
  );
}

function PropertyDialog() {
  const [tab, setTab] = useState("填充颜色");

  return (
    <section
      role="dialog"
      aria-label="动画组态属性设置"
      className="absolute left-[736px] top-[288px] w-[448px] overflow-hidden rounded-lg bg-[#f0f0f0] pb-[10px] shadow-[0_0_1px_rgba(0,0,0,0.5),0_16px_48px_8px_rgba(0,0,0,0.38)]"
    >
      <h2 className="h-[37px] bg-[#eff4f9] pl-[10px] text-[15px] leading-[34px] text-[#1a1a1a]">动画组态属性设置</h2>
      <div className={`px-[10px] pt-[11px] text-[13px] leading-4 text-black ${SONG_FONT}`}>
        <div role="tablist" className="flex items-end pl-[3px]">
          {TABS.map((name) => (
            <button
              key={name}
              type="button"
              role="tab"
              aria-selected={tab === name}
              onClick={() => setTab(name)}
              className={`flex items-center justify-center border-t border-l border-white ${
                tab === name
                  ? "z-10 -mb-px h-[26px] w-[70px] border-r-2 border-r-[#696969] bg-[#f0f0f0]"
                  : "h-[23px] w-[67px] pt-0.5"
              } ${name === "按钮动作" ? "border-r-2 border-r-[#696969]" : ""}`}
            >
              {name}
            </button>
          ))}
        </div>
        <div className="h-[318px] border border-t-white border-r-[#696969] border-b-[#696969] border-l-white pt-3 pr-[18px] pl-4 shadow-[inset_-1px_-1px_0_#a0a0a0]">
          <fieldset className={`h-[67px] ${FIELDSET}`}>
            <legend className="-ml-2 px-[3px]">表达式</legend>
            <div className="mt-[11px] flex">
              <input aria-label="表达式" className={`h-6 min-w-0 flex-1 bg-[#cfe8cb] px-1 ${SUNKEN}`} />
              <button type="button" className={`h-6 w-[27px] ${RAISED}`}>
                ?
              </button>
            </div>
          </fieldset>
          <fieldset className={`mt-3 h-[201px] ${FIELDSET}`}>
            <legend className="-ml-2 px-[3px]">填充颜色连接</legend>
            <div className="mt-[10px] flex items-start justify-between">
              <div className={`mt-0.5 h-[162px] w-[259px] bg-[#cfe8cb] pl-px ${SUNKEN}`}>
                <table className="w-[255px] table-fixed border-collapse text-left">
                  <thead>
                    <tr className="h-[18px] bg-[#f0f0f0]">
                      <th className={`w-[85px] p-0 pl-5 leading-4 font-normal ${RAISED}`}>分段点</th>
                      <th className={`p-0 pl-3 leading-4 font-normal ${RAISED}`}>对应颜色</th>
                    </tr>
                  </thead>
                  <tbody>
                    <tr className="h-6">
                      <td className="p-0">
                        <div className="h-[22px] bg-white pl-2 leading-5">1</div>
                      </td>
                      <ColorCell color="bg-[#00ff00]" />
                    </tr>
                    <tr className="h-6">
                      <td className="p-0">
                        <div className="ml-px h-5 w-[81px] bg-[#000080] p-px">
                          <input
                            aria-label="分段点"
                            defaultValue="0"
                            className="block h-[18px] w-[37px] border border-[#696969] bg-[#cfe8cb] pl-0.5"
                          />
                        </div>
                      </td>
                      <ColorCell color="bg-[#ff0000]" />
                    </tr>
                  </tbody>
                </table>
              </div>
              <div className="flex flex-col gap-[14px]">
                <button type="button" className={`h-7 w-20 ${RAISED}`}>
                  增加
                </button>
                <button type="button" className={`h-7 w-20 ${RAISED}`}>
                  删除
                </button>
              </div>
            </div>
          </fieldset>
        </div>
        <div className="mt-[7px] flex gap-0.5">
          {FOOTER.map((text) => (
            <button key={text} type="button" className={`h-7 flex-1 ${RAISED}`}>
              {text}
            </button>
          ))}
        </div>
      </div>
    </section>
  );
}

function Toolbox() {
  return (
    <aside className="absolute left-[1356px] top-[369px] w-[79px] rounded-md border border-[#b0b0b0] bg-[#f0f0f0] pb-px shadow-[0_6px_16px_rgba(0,0,0,0.3)]">
      <div className="flex h-[38px] items-center pl-[10px] text-[15px] leading-5 text-[#8c8c8c]">
        <span className="w-[41px] pb-1 whitespace-nowrap">工具...</span>
        <button type="button" aria-label="关闭工具箱" className="mt-1 flex h-[25px] w-[25px] items-center justify-center bg-[#d9d9d9]">
          <X className="h-2.5 w-2.5 text-[#f0f0f0]" strokeWidth={4} />
        </button>
      </div>
      <div className="ml-1 grid w-[69px] grid-cols-3">
        {TOOLBOX.map(([name, art], i) => (
          <ToolButton key={name} name={name} art={art} pressed={i === 0} />
        ))}
      </div>
    </aside>
  );
}

function ScreenMark() {
  return (
    <button
      type="button"
      className="absolute left-[1653px] top-[429px] flex h-[94px] w-[94px] flex-col items-center rounded-md bg-white pt-3 text-[15px] leading-5 text-black shadow-[0_0_1px_rgba(0,0,0,0.6),0_6px_16px_rgba(0,0,0,0.25)]"
    >
      <svg viewBox="0 0 40 42" className="h-[42px] w-10" aria-hidden="true">
        <path
          d="M15.5 15l3.8 8 8.7 1.200-6.3 6 1.6 8.800-7.800-4.200L7.700 39l1.600-8.800-6.300-6L11.700 23z"
          fill="none"
          stroke="#646464"
          strokeWidth="3.2"
          strokeLinejoin="round"
        />
        <path d="M27 2c1 4 2 5 6 6-4 1-5 2-6 6-1-4-2-5-6-6 4-1 5-2 6-6zM35.5 14c.8 3.2 1.3 3.7 4.5 4.500-3.200.8-3.700 1.300-4.500 4.500-.8-3.200-1.300-3.700-4.500-4.500 3.200-.8 3.700-1.300 4.500-4.500z" fill="#646464" />
      </svg>
      <span className="mt-[7px]">屏幕标记</span>
    </button>
  );
}

function StatusBar() {
  const field = `h-[17px] w-[38px] bg-[#cfe8cb] pl-0.5 text-sm leading-4 ${SUNKEN}`;

  return (
    <footer className={`flex h-[23px] items-center border-t border-white bg-[#f0f0f0] pt-0.5 pr-[41px] pl-px text-sm leading-5 text-black ${SONG_FONT}`}>
      <span className="flex-1">准备就绪,等待操作。</span>
      <span className="w-[199px]">类型:椭圆</span>
      <span className="w-[149px]">名称:控件24</span>
      <svg viewBox="0 0 15 15" className="mr-2 h-[15px] w-[15px]" fill="none" stroke="#000" shapeRendering="crispEdges" aria-hidden="true">
        <path d="M4.5 0v8M0 4.5h8" />
        <path d="M5.5 5.5h8v8h-8z" strokeDasharray="1 1" />
      </svg>
      <input aria-label="横坐标" className={`mr-[7px] ${field}`} defaultValue="141" />
      <input aria-label="纵坐标" className={`mr-2 ${field}`} defaultValue="32" />
      <svg viewBox="0 0 16 16" className="mr-[7px] h-4 w-4" fill="none" stroke="#000" shapeRendering="crispEdges" aria-hidden="true">
        <path d="M7 2.5h8M7.5 0v5M15.5 0v5M13 0.5l2 2-2 2M0 7.5h5M0 15.5h5M2.5 8v7M.5 13l2 2 2-2" />
        <path d="M7.5 7.5h8v8h-8z" strokeDasharray="1 1" />
      </svg>
      <input aria-label="宽度" className={`mr-[7px] ${field}`} defaultValue="105" />
      <input aria-label="高度" className={field} defaultValue="90" />
    </footer>
  );
}

function TaskIcon({ label, active, running, children }: { label: string; active?: boolean; running?: boolean; children: ReactNode }) {
  return (
    <button
      type="button"
      aria-label={label}
      className={`flex h-[50px] w-[50px] flex-col items-center rounded-md ${active ? "border border-white/10 bg-white/8 pt-[9px]" : "pt-[10px]"}`}
    >
      {children}
      {running ? <span className={`mt-[5px] h-1 rounded-full ${active ? "w-5 bg-[#4fb9ec]" : "w-2 bg-[#99968d]"}`} /> : null}
    </button>
  );
}

function Taskbar() {
  return (
    <div className="flex h-[60px] items-center bg-linear-to-r from-[#252835] via-[#2f2418] via-25% to-[#2f2416] text-white">
      <div className="flex-1" />
      <div className="flex gap-1.5">
        <TaskIcon label="开始">
          <svg viewBox="0 0 30 30" className="h-[30px] w-[30px]" aria-hidden="true">
            <defs>
              <linearGradient id="win" x1="0" y1="0" x2="1" y2="1">
                <stop offset="0" stopColor="#7fe3fb" />
                <stop offset="1" stopColor="#1b95ea" />
              </linearGradient>
            </defs>
            <path d="M1 1h13.500v13.500H1zM15.500 1H30v13.500H15.500zM1 15.500h13.500V30H1zM15.500 15.500H30V30H15.500z" fill="url(#win)" />
          </svg>
        </TaskIcon>
        <TaskIcon label="Edge" running>
          <svg viewBox="0 0 30 30" className="h-[30px] w-[30px]" aria-hidden="true">
            <defs>
              <linearGradient id="edge-top" x1="0" y1="0" x2="1" y2="0.4">
                <stop offset="0" stopColor="#1f9ad6" />
                <stop offset="0.5" stopColor="#35c1d0" />
                <stop offset="1" stopColor="#64d64a" />
              </linearGradient>
            </defs>
            <circle cx="15" cy="15" r="15" fill="#1277c8" />
            <path d="M0 14C1 5 8 0 15 0c9 0 15 6 15 13 0 5-4 7-8 7-3 0-5-1-4-3 2-3 0-7-5-7C7 9 1 11 0 14z" fill="url(#edge-top)" />
            <path d="M13 10c-5 1-6 6-4 11 2 4 7 7 12 7-2 1-4 2-7 2C7 29 3 23 4 17c1-4 5-7 9-7z" fill="#1464a8" />
            <path d="M18 17c-1 2 1 3 4 3 3 0 6-1 7-3 0 4-3 7-6 8-5 1-9-2-9-6 0-3 2-5 4-5z" fill="#2f2618" />
          </svg>
        </TaskIcon>
        <TaskIcon label="文件资源管理器" running>
          <svg viewBox="0 0 30 30" className="h-[30px] w-[30px]" aria-hidden="true">
            <path d="M0 4a2 2 0 0 1 2-2h8l3 3v6H0z" fill="#d99a1c" />
            <path d="M0 9h9l4-4h15a2 2 0 0 1 2 2v20a2 2 0 0 1-2 2H2a2 2 0 0 1-2-2z" fill="#fbcb4b" />
            <path d="M5 29v-5a3 3 0 0 1 3-3h14a3 3 0 0 1 3 3v5z" fill="#1a6fb8" />
            <path d="M9 25h12" stroke="#0c4a85" strokeWidth="2" />
          </svg>
        </TaskIcon>
        <TaskIcon label="MCGS" running active>
          <McgsLogo className="h-[30px] w-[30px]" />
        </TaskIcon>
      </div>
      <div className="flex flex-1 items-center justify-end">
        <button type="button" aria-label="显示隐藏的图标" className="mr-[23px]">
          <ChevronUp className="h-5 w-5" />
        </button>
        <button type="button" aria-label="麦克风" className="mr-[23px]">
          <Mic className="h-5 w-5 text-[#9adbe6]" strokeWidth={1.5} />
        </button>
        <button type="button" className="mr-[29px] text-base leading-5">
          中
        </button>
        <button type="button" aria-label="QQ浏览器" className="mr-[27px]">
          <svg viewBox="0 0 20 20" className="h-5 w-5" fill="none" stroke="#fff" strokeWidth="2" aria-hidden="true">
            <rect width="20" height="20" rx="4" fill="#3d8df2" stroke="none" />
            <circle cx="10" cy="10" r="5" />
            <path d="M12 12l3 3" />
            <circle cx="15.5" cy="15.5" r="1.5" fill="#6bea8a" stroke="none" />
          </svg>
        </button>
        <button type="button" aria-label="网络" className="mr-[9px]">
          <svg viewBox="0 0 20 20" className="h-5 w-5" fill="none" stroke="#fff" strokeWidth="1.5" aria-hidden="true">
            <path d="M12 1.5H2.5a1 1 0 0 0-1 1v12a1 1 0 0 0 1 1h12M4 19h9M6.5 16v3M10.5 16v3M17 8v11M15 1h4v5l-1 1h-2l-1-1z" />
          </svg>
        </button>
        <button type="button" aria-label="音量" className="mr-[11px]">
          <Volume2 className="h-5 w-5" strokeWidth={1.5} />
        </button>
        <button type="button" aria-label="电池" className="mr-3">
          <svg viewBox="0 0 20 20" className="h-5 w-5" fill="none" stroke="#fff" strokeWidth="1.5" aria-hidden="true">
            <path d="M8 4.5h7a2 2 0 0 1 2 2v9a2 2 0 0 1-2 2H3a2 2 0 0 1-2-2V11M19 9v4" />
            <path d="M4 1L1 8h3l-1 4 5-6H5l1-5z" fill="#fff" stroke="none" />
            <path d="M3 15l5-6 4-2v8z" fill="#fff" stroke="none" />
          </svg>
        </button>
        <div className="mr-[10px] w-[86px] text-right text-sm leading-[21px]">
          <div>12:43</div>
          <div>2024/10/21</div>
        </div>
        <button type="button" aria-label="通知" className="mr-[26px]">
          <svg viewBox="0 0 18 20" className="h-5 w-[18px]" fill="none" stroke="#fff" strokeWidth="1.5" aria-hidden="true">
            <path d="M11 3H8a5 5 0 0 0-5 5v4l-2 4h15l-2-4M6.5 16.5a2.5 2.5 0 0 0 5 0M6.5 7.5H11L6.5 12H11M13 1.500h4L13 6h4" />
          </svg>
        </button>
      </div>
    </div>
  );
}

export default function App() {
  return (
    <div className={`relative flex h-screen w-full flex-col overflow-hidden bg-white ${UI_FONT}`}>
      <TitleBar />
      <MenuBar />
      <Toolbars />
      <main className="relative mr-0.5 min-h-0 flex-1 overflow-hidden border-t-2 border-l-2 border-[#6e6e6e] bg-[#ababab]">
        <ChildWindow />
      </main>
      <StatusBar />
      <Taskbar />
      <PropertyDialog />
      <Toolbox />
      <ScreenMark />
      <span className="absolute left-[895px] top-[15px] h-0.5 w-0.5 bg-[#e03030]" />
      <span className="absolute left-[840px] top-0 h-px w-60 bg-[#dcdcdc]" />
    </div>
  );
}
